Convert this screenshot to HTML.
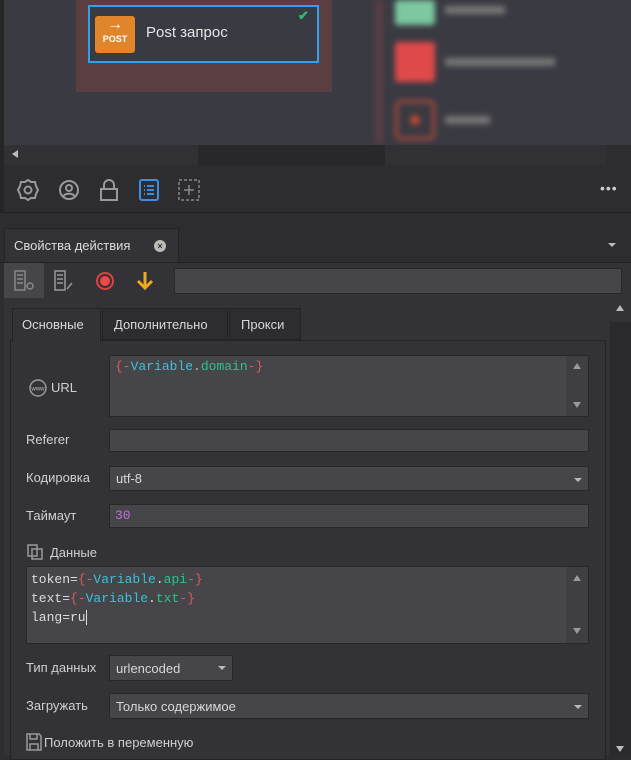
<!DOCTYPE html>
<html><head><meta charset="utf-8"><style>
*{box-sizing:border-box;margin:0;padding:0}
body{width:631px;height:755px;overflow:hidden;background:#2d2d30;font-family:"Liberation Sans","Noto Sans CJK SC",sans-serif;font-size:13px;color:#d8d8d8;position:relative}
.a{position:absolute}
.inp{position:absolute;background:#45454a;border:1px solid #28282b}
.mono{font-family:"Liberation Mono",monospace;font-size:13px}
.lbl{position:absolute;font-size:13px;color:#d0d0d0}
.r{color:#e05a5a}.c{color:#3fc1d6}.g{color:#2fc28a}
.dd{position:absolute;width:0;height:0;border-left:4px solid transparent;border-right:4px solid transparent;border-top:4px solid #bbb}
.blur{filter:blur(3px)}
</style></head><body>
<div class="a" style="left:4px;top:0;width:627px;height:145px;background:#3a3a42"></div>
<div class="a" style="left:0;top:0;width:4px;height:213px;background:#252527"></div>
<div class="a" style="left:76px;top:0;width:256px;height:92px;background:#5a3e42"></div>
<div class="a" style="left:88px;top:5px;width:231px;height:58px;background:#3a3a42;border:2px solid #2ea0f0"></div>
<div class="a" style="left:95px;top:16px;width:40px;height:37px;background:#e0852a;border-radius:3px;color:#fff;text-align:center">
<div style="font-size:16px;line-height:16px;font-weight:bold;margin-top:1px">→</div>
<div style="font-size:9px;font-weight:bold;line-height:12px">POST</div></div>
<div class="a" style="left:146px;top:24px;font-size:15px;color:#e6e6e6">Post запрос</div>
<div class="a" style="left:298px;top:8px;color:#2fb87a;font-size:13px;font-weight:bold">✔</div>
<div class="blur">
<div class="a" style="left:375px;top:0;width:8px;height:145px;background:#5a3e42"></div>
<div class="a" style="left:395px;top:0;width:40px;height:25px;background:#7cc8a0;border-radius:3px"></div>
<div class="a" style="left:445px;top:6px;width:60px;height:8px;background:#777"></div>
<div class="a" style="left:395px;top:42px;width:40px;height:40px;background:#e04a4a;border-radius:3px"></div>
<div class="a" style="left:445px;top:58px;width:110px;height:8px;background:#777"></div>
<div class="a" style="left:395px;top:100px;width:40px;height:40px;border:3px solid #b04a38;border-radius:5px"></div>
<div class="a" style="left:410px;top:115px;width:10px;height:10px;background:#c04a30;border-radius:50%"></div>
<div class="a" style="left:445px;top:116px;width:45px;height:8px;background:#777"></div>
</div>
<div class="a" style="left:4px;top:145px;width:602px;height:20px;background:#303035"></div>
<div class="a" style="left:198px;top:145px;width:187px;height:20px;background:#28282b"></div>
<div class="a" style="left:12px;top:150px;width:0;height:0;border-top:4px solid transparent;border-bottom:4px solid transparent;border-right:6px solid #bbb"></div>
<div class="a" style="left:4px;top:165px;width:627px;height:48px;background:#2d2d30;border-bottom:1px solid #1f1f21"></div>
<svg class="a" style="left:16px;top:178px" width="24" height="24" viewBox="0 0 24 24" fill="none" stroke="#999" stroke-width="2"><path d="M12 2l3 2 4 0 1 4 2 4-2 4-1 4-4 0-3 2-3-2-4 0-1-4-2-4 2-4 1-4 4 0z"/><circle cx="12" cy="12" r="3.5"/></svg>
<svg class="a" style="left:57px;top:178px" width="24" height="24" viewBox="0 0 24 24" fill="none" stroke="#999" stroke-width="2"><circle cx="12" cy="12" r="9"/><circle cx="12" cy="10" r="3"/><path d="M6.5 18c2-3 9-3 11 0"/></svg>
<svg class="a" style="left:98px;top:178px" width="22" height="24" viewBox="0 0 22 24" fill="none" stroke="#999" stroke-width="2"><path d="M6 11V7a5 5 0 0110 0v4"/><rect x="3" y="11" width="16" height="11"/></svg>
<svg class="a" style="left:138px;top:178px" width="22" height="24" viewBox="0 0 22 24" fill="none" stroke="#3a8ee6" stroke-width="2"><rect x="2" y="2" width="18" height="20" rx="2"/><path d="M6 8h1M9 8h7M6 12h1M9 12h7M6 16h1M9 16h7"/></svg>
<svg class="a" style="left:178px;top:178px" width="22" height="24" viewBox="0 0 22 24" fill="none" stroke="#888" stroke-width="1.5" stroke-dasharray="3 2"><rect x="1" y="2" width="20" height="20"/><path d="M11 7v10M6 12h10" stroke-dasharray="none"/></svg>
<div class="a" style="left:600px;top:180px;color:#ccc;font-size:14px;letter-spacing:1px">•••</div>
<div class="a" style="left:4px;top:228px;width:175px;height:35px;background:#333337;border:1px solid #232325;border-bottom:none"></div>
<div class="a" style="left:14px;top:238px;color:#dcdcdc">Свойства действия</div>
<div class="a" style="left:154px;top:240px;width:12px;height:12px;border-radius:50%;background:#bbb;color:#333;font-size:9px;line-height:12px;text-align:center;font-weight:bold">×</div>
<div class="dd" style="left:608px;top:243px"></div>
<div class="a" style="left:0;top:262px;width:631px;height:1px;background:#232325"></div>
<div class="a" style="left:4px;top:263px;width:627px;height:492px;background:#333337"></div>
<div class="a" style="left:4px;top:263px;width:40px;height:35px;background:#45454a"></div>
<svg class="a" style="left:13px;top:270px" width="24" height="22" viewBox="0 0 24 22" fill="none" stroke="#888" stroke-width="1.5"><path d="M2 1h10v19H2zM4 5h6M4 9h6M4 13h6"/><circle cx="17" cy="16" r="3"/></svg>
<svg class="a" style="left:53px;top:270px" width="24" height="22" viewBox="0 0 24 22" fill="none" stroke="#999" stroke-width="1.5"><path d="M2 1h10v19H2zM4 5h6M4 9h6M4 13h6M14 19l5-6"/></svg>
<div class="a" style="left:96px;top:272px;width:18px;height:18px;border-radius:50%;border:2px solid #e04040"></div>
<div class="a" style="left:100px;top:276px;width:10px;height:10px;border-radius:50%;background:#f04848"></div>
<svg class="a" style="left:135px;top:270px" width="20" height="22" viewBox="0 0 20 22" fill="none" stroke="#f0a820" stroke-width="3"><path d="M10 2v16M3 11l7 7 7-7"/></svg>
<div class="inp" style="left:174px;top:268px;width:448px;height:26px;background:#45454a"></div>
<div class="a" style="left:12px;top:308px;width:89px;height:34px;background:#333337;border:1px solid #232325;border-bottom:none;z-index:2"></div>
<div class="a" style="left:22px;top:317px;z-index:3">Основные</div>
<div class="a" style="left:102px;top:308px;width:126px;height:32px;background:#2d2d30;border:1px solid #232325"></div>
<div class="a" style="left:114px;top:317px">Дополнительно</div>
<div class="a" style="left:229px;top:308px;width:72px;height:32px;background:#2d2d30;border:1px solid #232325"></div>
<div class="a" style="left:241px;top:317px">Прокси</div>
<div class="a" style="left:10px;top:340px;width:596px;height:420px;border:1px solid #232325;background:#333337"></div>
<div class="a" style="left:610px;top:322px;width:21px;height:433px;background:#2a2a2d"></div>
<div class="a" style="left:616px;top:305px;width:0;height:0;border-left:4px solid transparent;border-right:4px solid transparent;border-bottom:6px solid #bbb"></div>
<div class="a" style="left:616px;top:746px;width:0;height:0;border-left:4px solid transparent;border-right:4px solid transparent;border-top:6px solid #bbb"></div>
<svg class="a" style="left:28px;top:378px" width="20" height="20" viewBox="0 0 20 20"><circle cx="10" cy="10" r="8" fill="none" stroke="#999" stroke-width="1.5"/><text x="10" y="12.5" font-size="6" fill="#bbb" text-anchor="middle" font-family="Liberation Sans">www</text></svg>
<div class="lbl" style="left:51px;top:380px">URL</div>
<div class="inp" style="left:109px;top:355px;width:480px;height:62px"></div>
<div class="a" style="left:566px;top:356px;width:22px;height:60px;background:#3e3e43"></div>
<div class="a" style="left:573px;top:363px;border-left:4px solid transparent;border-right:4px solid transparent;border-bottom:6px solid #999"></div>
<div class="a" style="left:573px;top:402px;border-left:4px solid transparent;border-right:4px solid transparent;border-top:6px solid #999"></div>
<div class="a mono" style="left:115px;top:359px"><span class="r">{-</span><span class="c">Variable</span><span style="color:#bbb">.</span><span class="g">domain</span><span class="r">-}</span></div>
<div class="lbl" style="left:26px;top:432px">Referer</div>
<div class="inp" style="left:109px;top:429px;width:480px;height:23px"></div>
<div class="lbl" style="left:26px;top:470px">Кодировка</div>
<div class="inp" style="left:109px;top:466px;width:480px;height:25px"></div>
<div class="a" style="left:116px;top:471px">utf-8</div>
<div class="dd" style="left:574px;top:478px"></div>
<div class="lbl" style="left:26px;top:508px">Таймаут</div>
<div class="inp" style="left:109px;top:504px;width:480px;height:24px"></div>
<div class="a mono" style="left:115px;top:508px;color:#c070e0">30</div>
<svg class="a" style="left:27px;top:544px" width="17" height="16" viewBox="0 0 17 16" fill="none" stroke="#999" stroke-width="1.5"><path d="M1 1h9v11H1zM5 5h10v10H5z"/></svg>
<div class="lbl" style="left:50px;top:545px">Данные</div>
<div class="inp" style="left:26px;top:566px;width:563px;height:78px"></div>
<div class="a" style="left:566px;top:567px;width:22px;height:76px;background:#3e3e43"></div>
<div class="a" style="left:573px;top:575px;border-left:4px solid transparent;border-right:4px solid transparent;border-bottom:6px solid #999"></div>
<div class="a" style="left:573px;top:628px;border-left:4px solid transparent;border-right:4px solid transparent;border-top:6px solid #999"></div>
<div class="a mono" style="left:31px;top:570px;line-height:19px;color:#ddd">token=<span class="r">{-</span><span class="c">Variable</span>.<span class="g">api</span><span class="r">-}</span><br>text=<span class="r">{-</span><span class="c">Variable</span>.<span class="g">txt</span><span class="r">-}</span><br>lang=ru<span style="border-left:1px solid #ddd"></span></div>
<div class="lbl" style="left:26px;top:660px">Тип данных</div>
<div class="inp" style="left:109px;top:655px;width:124px;height:26px"></div>
<div class="a" style="left:116px;top:661px">urlencoded</div>
<div class="dd" style="left:218px;top:666px"></div>
<div class="lbl" style="left:26px;top:698px">Загружать</div>
<div class="inp" style="left:109px;top:693px;width:480px;height:26px"></div>
<div class="a" style="left:116px;top:699px">Только содержимое</div>
<div class="dd" style="left:574px;top:705px"></div>
<svg class="a" style="left:26px;top:733px" width="16" height="18" viewBox="0 0 16 18" fill="none" stroke="#999" stroke-width="1.5"><path d="M1 1h12l2 2v14H1zM4 1v5h7V1M4 17v-6h8v6"/></svg>
<div class="lbl" style="left:44px;top:735px">Положить в переменную</div>
</body></html>
